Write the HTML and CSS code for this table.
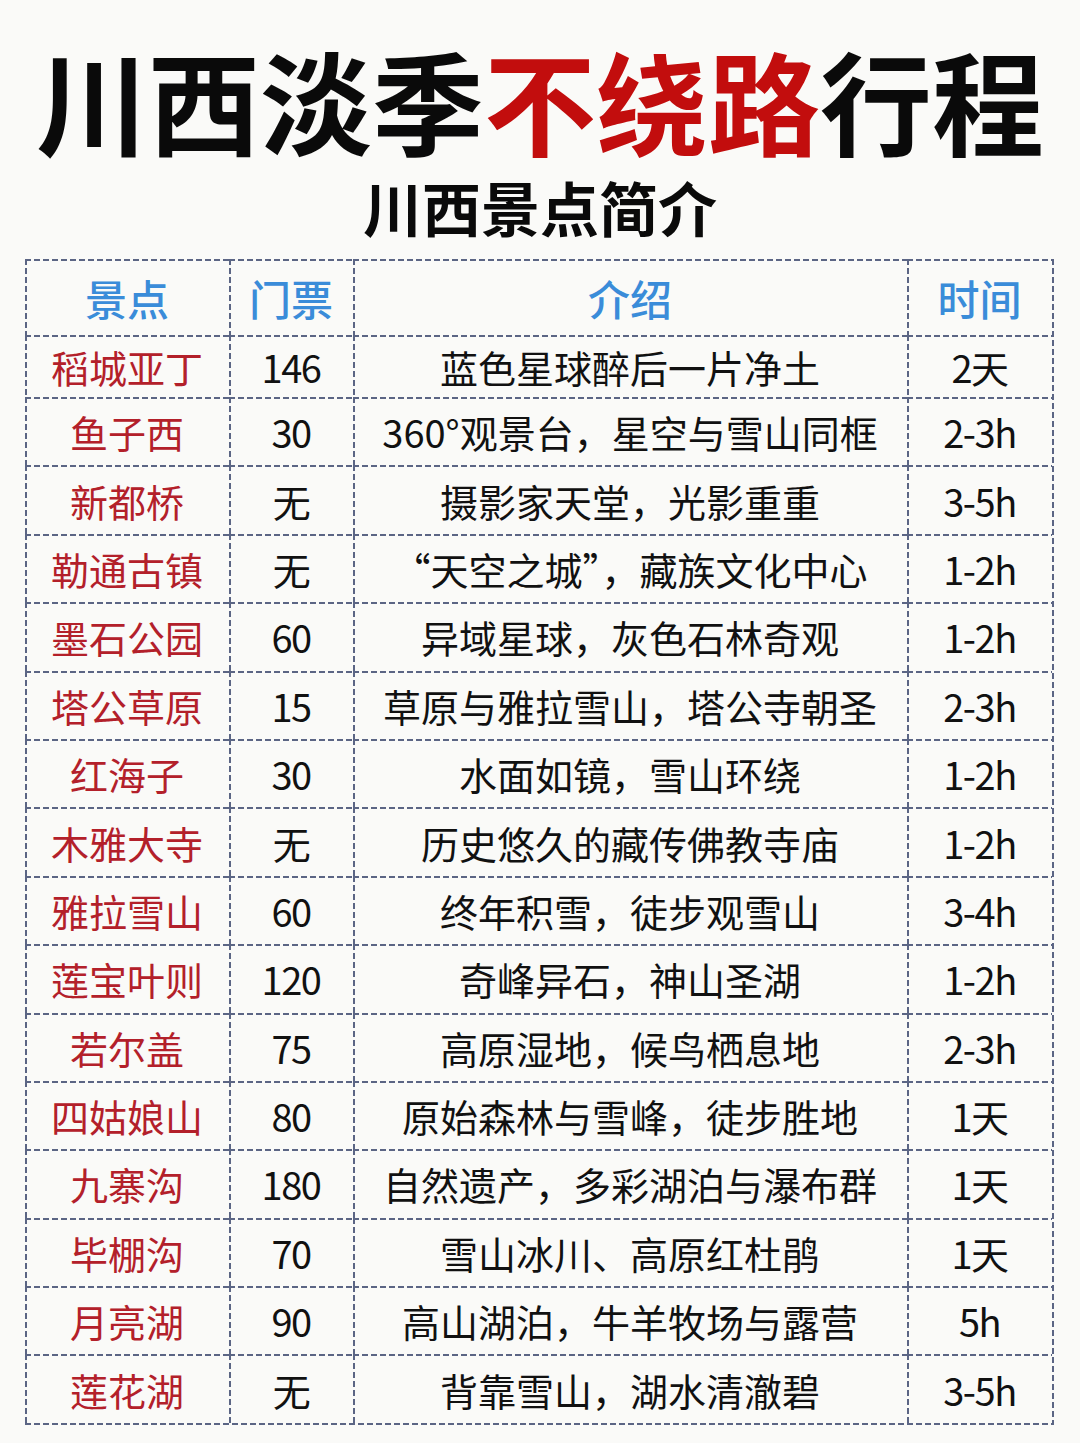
FILE: index.html
```html
<!DOCTYPE html>
<html lang="zh-CN">
<head>
<meta charset="utf-8">
<title>川西淡季不绕路行程</title>
<link rel="stylesheet" href="styles.css">
</head>
<body>
<div class="page">
  <h1 class="title">川西淡季<span class="red">不绕路</span>行程</h1>
  <h2 class="subtitle">川西景点简介</h2>
  <div class="table">
    <div class="cell head">景点</div><div class="cell head">门票</div><div class="cell head">介绍</div><div class="cell head">时间</div>
    <div class="cell name">稻城亚丁</div><div class="cell num">146</div><div class="cell">蓝色星球醉后一片净土</div><div class="cell num">2天</div>
    <div class="cell name">鱼子西</div><div class="cell num">30</div><div class="cell">360°观景台，星空与雪山同框</div><div class="cell num">2-3h</div>
    <div class="cell name">新都桥</div><div class="cell num">无</div><div class="cell">摄影家天堂，光影重重</div><div class="cell num">3-5h</div>
    <div class="cell name">勒通古镇</div><div class="cell num">无</div><div class="cell">“天空之城”，藏族文化中心</div><div class="cell num">1-2h</div>
    <div class="cell name">墨石公园</div><div class="cell num">60</div><div class="cell">异域星球，灰色石林奇观</div><div class="cell num">1-2h</div>
    <div class="cell name">塔公草原</div><div class="cell num">15</div><div class="cell">草原与雅拉雪山，塔公寺朝圣</div><div class="cell num">2-3h</div>
    <div class="cell name">红海子</div><div class="cell num">30</div><div class="cell">水面如镜，雪山环绕</div><div class="cell num">1-2h</div>
    <div class="cell name">木雅大寺</div><div class="cell num">无</div><div class="cell">历史悠久的藏传佛教寺庙</div><div class="cell num">1-2h</div>
    <div class="cell name">雅拉雪山</div><div class="cell num">60</div><div class="cell">终年积雪，徒步观雪山</div><div class="cell num">3-4h</div>
    <div class="cell name">莲宝叶则</div><div class="cell num">120</div><div class="cell">奇峰异石，神山圣湖</div><div class="cell num">1-2h</div>
    <div class="cell name">若尔盖</div><div class="cell num">75</div><div class="cell">高原湿地，候鸟栖息地</div><div class="cell num">2-3h</div>
    <div class="cell name">四姑娘山</div><div class="cell num">80</div><div class="cell">原始森林与雪峰，徒步胜地</div><div class="cell num">1天</div>
    <div class="cell name">九寨沟</div><div class="cell num">180</div><div class="cell">自然遗产，多彩湖泊与瀑布群</div><div class="cell num">1天</div>
    <div class="cell name">毕棚沟</div><div class="cell num">70</div><div class="cell">雪山冰川、高原红杜鹃</div><div class="cell num">1天</div>
    <div class="cell name">月亮湖</div><div class="cell num">90</div><div class="cell">高山湖泊，牛羊牧场与露营</div><div class="cell num">5h</div>
    <div class="cell name">莲花湖</div><div class="cell num">无</div><div class="cell">背靠雪山，湖水清澈碧</div><div class="cell num">3-5h</div>
  </div>
</div>
</body>
</html>
```

FILE: styles.css
```css
* { box-sizing: border-box; }
html, body {
  margin: 0;
  padding: 0;
  background: #fafaf8;
}
body {
  font-family: "Noto Sans CJK SC", "Noto Sans", sans-serif;
  color: #111;
}
.page {
  width: 1080px;
  height: 1443px;
  padding-top: 43px;
  display: flex;
  flex-direction: column;
  align-items: center;
}
.title {
  margin: 0;
  font-size: 112px;
  line-height: 112px;
  font-weight: 700;
  color: #0a0a0a;
  white-space: nowrap;
}
.title .red { color: #c20d0d; }
.subtitle {
  margin: 22px 0 0;
  font-size: 59px;
  line-height: 59px;
  font-weight: 700;
  color: #0a0a0a;
}
.table {
  margin: 23px 0 0 -1px;
  display: grid;
  grid-template-columns: 204px 124px 554px 145px;
  grid-template-rows: 76px 62px repeat(15, 68.4px);
  padding: 0 2px 2px 0;
  background-image:
    repeating-linear-gradient(90deg, #5b6584 0 6px, transparent 6px 9px),
    repeating-linear-gradient(180deg, #5b6584 0 6px, transparent 6px 9px);
  background-size: 100% 2px, 2px 100%;
  background-position: left bottom, right top;
  background-repeat: no-repeat;
}
.cell {
  display: flex;
  align-items: center;
  justify-content: center;
  font-size: 38px;
  line-height: 1;
  white-space: nowrap;
  color: #111;
  padding-top: 2px;
  background-image:
    repeating-linear-gradient(90deg, #5b6584 0 6px, transparent 6px 9px),
    repeating-linear-gradient(180deg, #5b6584 0 6px, transparent 6px 9px);
  background-size: 100% 2px, 2px 100%;
  background-position: left top, left top;
  background-repeat: no-repeat;
}
.head {
  font-size: 42px;
  color: #3a8cd9;
  font-weight: 500;
  padding-top: 2px;
}
.name { color: #b3202a; }
.num { letter-spacing: -1.5px; }
```
